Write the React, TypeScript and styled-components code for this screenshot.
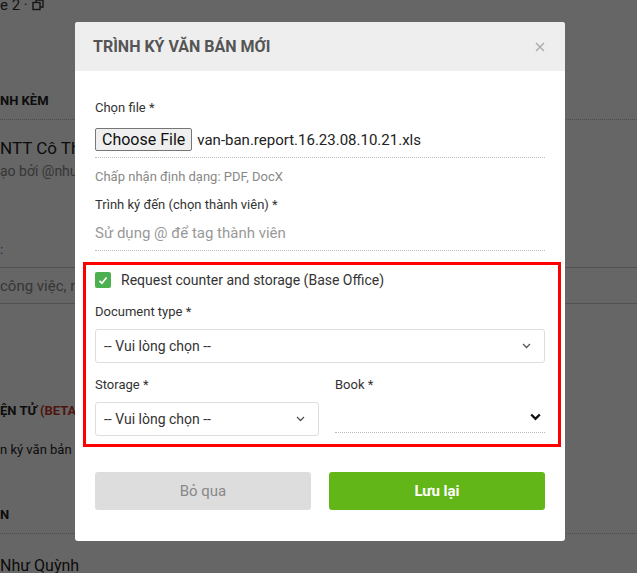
import React from "react";
import styled, { createGlobalStyle } from "styled-components";

const GlobalStyle = createGlobalStyle`
  html, body { margin: 0; padding: 0; }
  body {
    font-family: Roboto, "Noto Sans", "Liberation Sans", sans-serif;
    color: #333;
    overflow: hidden;
    background: #fff;
  }
  * { box-sizing: border-box; }
`;

const Page = styled.div`
  position: relative;
  width: 637px;
  height: 573px;
  overflow: hidden;
  background: #fff;
`;

/* ---------- background page (dimmed) ---------- */
const BgColumn = styled.div`
  display: flex;
  flex-direction: column;
  width: 100%;
`;

const BgTop = styled.div`
  font-size: 15px;
  line-height: 18px;
  margin-top: -4px;
  color: #333;
  display: flex;
  align-items: center;
  gap: 4px;
`;

const BgSectionTitle = styled.div<{ $mt: number; $line?: boolean }>`
  margin-top: ${(p) => p.$mt}px;
  font-size: 13px;
  font-weight: 700;
  line-height: 18px;
  color: #222;
  padding-bottom: 9px;
  border-bottom: ${(p) => (p.$line ? "1px dotted #bbb" : "none")};
`;

const BgBig = styled.div<{ $mt: number }>`
  margin-top: ${(p) => p.$mt}px;
  font-size: 17px;
  line-height: 20px;
  color: #222;
`;

const BgSub = styled.div<{ $mt: number }>`
  margin-top: ${(p) => p.$mt}px;
  font-size: 14px;
  line-height: 18px;
  color: #888;
`;

const BgLink = styled.div`
  margin-top: 62px;
  font-size: 13px;
  line-height: 16px;
  color: #2d7be5;
`;

const BgInput = styled.div`
  margin-top: 9px;
  border-top: 1px solid #ccc;
  border-bottom: 1px solid #ccc;
  height: 37px;
  display: flex;
  align-items: center;
  font-size: 15px;
  color: #888;
`;

const Beta = styled.span`
  color: #c0392b;
`;

const BgText = styled.div<{ $mt: number }>`
  margin-top: ${(p) => p.$mt}px;
  font-size: 13px;
  line-height: 18px;
  color: #222;
`;

const BgName = styled.div`
  margin-top: 22px;
  font-size: 16px;
  line-height: 20px;
  color: #222;
`;

const Overlay = styled.div`
  position: absolute;
  inset: 0;
  background: rgba(0, 0, 0, 0.6);
`;

/* ---------- modal ---------- */
const Modal = styled.div`
  position: absolute;
  left: 75px;
  top: 22px;
  width: 490px;
  background: #fff;
  border-radius: 3px;
  overflow: hidden;
`;

const Header = styled.div`
  height: 49px;
  background: #eeeeee;
  display: flex;
  align-items: center;
  justify-content: space-between;
  padding: 0 18px 0 18px;
`;

const Title = styled.h3`
  margin: 0;
  font-size: 16px;
  font-weight: 700;
  color: #555;
  letter-spacing: 0;
`;

const Close = styled.button`
  border: none;
  background: none;
  padding: 0;
  width: 14px;
  height: 14px;
  display: flex;
  align-items: center;
  justify-content: center;
  cursor: pointer;
`;

const Body = styled.div`
  padding: 29px 20px 31px;
  display: flex;
  flex-direction: column;
`;

const Label = styled.div<{ $mt?: number }>`
  margin-top: ${(p) => p.$mt ?? 0}px;
  font-size: 13px;
  line-height: 16px;
  color: #333;
`;

const FileRow = styled.div`
  margin-top: 12px;
  display: flex;
  align-items: center;
  gap: 5px;
  padding-bottom: 6px;
  border-bottom: 1px dotted #bbb;
`;

const ChooseBtn = styled.span`
  display: inline-flex;
  align-items: center;
  height: 23px;
  padding: 0 6px;
  background: #efefef;
  border: 1px solid #767676;
  border-radius: 2px;
  font-size: 16px;
  color: #111;
`;

const FileName = styled.span`
  font-size: 15px;
  color: #222;
`;

const Hint = styled.div`
  margin-top: 10px;
  font-size: 13px;
  line-height: 18px;
  color: #888;
`;

const TagInput = styled.div`
  margin-top: 9px;
  font-size: 15px;
  line-height: 22px;
  color: #999;
  padding-bottom: 6px;
  border-bottom: 1px dotted #bbb;
`;

const Highlight = styled.div`
  margin: 11px -16px 0 -12px;
  border: 3px solid #ff0000;
  padding: 7px 13px 8px 9px;
  display: flex;
  flex-direction: column;
`;

const CheckRow = styled.label`
  display: flex;
  align-items: center;
  gap: 10px;
  font-size: 14px;
  color: #333;
  height: 16px;
`;

const CheckBox = styled.span`
  width: 16px;
  height: 16px;
  border-radius: 2px;
  background: #4caf50;
  display: flex;
  align-items: center;
  justify-content: center;
`;

const SelectBox = styled.div<{ $mt?: number }>`
  margin-top: ${(p) => p.$mt ?? 9}px;
  height: 34px;
  border: 1px solid #dedede;
  border-radius: 3px;
  display: flex;
  align-items: center;
  justify-content: space-between;
  padding: 0 13px 0 8px;
  font-size: 14px;
  color: #333;
`;

const UnderlineSelect = styled.div`
  margin-top: 9px;
  height: 31px;
  border-bottom: 1px dotted #bbb;
  display: flex;
  align-items: center;
  justify-content: flex-end;
  padding: 0 4px 0 0;
`;

const Grid = styled.div`
  margin-top: 14px;
  display: grid;
  grid-template-columns: 224px 1fr;
  column-gap: 16px;
`;

const Col = styled.div`
  display: flex;
  flex-direction: column;
`;

const Actions = styled.div`
  margin-top: 25px;
  display: grid;
  grid-template-columns: 1fr 1fr;
  column-gap: 18px;
`;

const Btn = styled.button<{ $primary?: boolean }>`
  height: 38px;
  border: none;
  border-radius: 3px;
  font-family: inherit;
  font-size: 15px;
  font-weight: ${(p) => (p.$primary ? 700 : 400)};
  background: ${(p) => (p.$primary ? "#62b618" : "#dddddd")};
  color: ${(p) => (p.$primary ? "#fff" : "#888")};
  cursor: pointer;
`;

const ThinChevron = () => (
  <svg width="9" height="6" viewBox="0 0 9 6" fill="none">
    <path d="M1 1l3.5 3.5L8 1" stroke="#555" strokeWidth="1.3" />
  </svg>
);

const BoldChevron = () => (
  <svg width="11" height="8" viewBox="0 0 11 8" fill="none">
    <path d="M1.2 1.5l4.3 4.3 4.3-4.3" stroke="#111" strokeWidth="2.4" />
  </svg>
);

export default function App() {
  return (
    <Page>
      <GlobalStyle />
      <BgColumn>
        <BgTop>
          e 2 ·
          <svg width="12" height="12" viewBox="0 0 12 12" fill="none">
            <rect x="1" y="3.5" width="7" height="7" stroke="#333" strokeWidth="1.4" />
            <path d="M4 3.5V1h7v7H8" stroke="#333" strokeWidth="1.4" />
          </svg>
        </BgTop>
        <BgSectionTitle $mt={78} $line>
          NH KÈM
        </BgSectionTitle>
        <BgBig $mt={18}>NTT Cô Thị</BgBig>
        <BgSub $mt={4}>ạo bởi @nhuquynh</BgSub>
        <BgLink>:</BgLink>
        <BgInput>công việc, nhận xét</BgInput>
        <BgSectionTitle $mt={98}>
          ỆN TỬ <Beta>(BETA*)</Beta>
        </BgSectionTitle>
        <BgText $mt={12}>n ký văn bản mới</BgText>
        <BgSectionTitle $mt={47} $line>
          N
        </BgSectionTitle>
        <BgName>Như Quỳnh</BgName>
      </BgColumn>
      <Overlay />
      <Modal>
        <Header>
          <Title>TRÌNH KÝ VĂN BÁN MỚI</Title>
          <Close aria-label="close">
            <svg width="10" height="10" viewBox="0 0 10 10">
              <path d="M1 1l8 8M9 1l-8 8" stroke="#aaa" strokeWidth="1.4" />
            </svg>
          </Close>
        </Header>
        <Body>
          <Label>Chọn file *</Label>
          <FileRow>
            <ChooseBtn>Choose File</ChooseBtn>
            <FileName>van-ban.report.16.23.08.10.21.xls</FileName>
          </FileRow>
          <Hint>Chấp nhận định dạng: PDF, DocX</Hint>
          <Label $mt={11}>Trình ký đến (chọn thành viên) *</Label>
          <TagInput>Sử dụng @ để tag thành viên</TagInput>
          <Highlight>
            <CheckRow>
              <CheckBox>
                <svg width="10" height="9" viewBox="0 0 10 9" fill="none">
                  <path d="M1.5 4.8l2.4 2.4L8.6 1.5" stroke="#fff" strokeWidth="1.8" />
                </svg>
              </CheckBox>
              Request counter and storage (Base Office)
            </CheckRow>
            <Label $mt={16}>Document type *</Label>
            <SelectBox>
              -- Vui lòng chọn --
              <ThinChevron />
            </SelectBox>
            <Grid>
              <Col>
                <Label>Storage *</Label>
                <SelectBox>
                  -- Vui lòng chọn --
                  <ThinChevron />
                </SelectBox>
              </Col>
              <Col>
                <Label>Book *</Label>
                <UnderlineSelect>
                  <BoldChevron />
                </UnderlineSelect>
              </Col>
            </Grid>
          </Highlight>
          <Actions>
            <Btn>Bỏ qua</Btn>
            <Btn $primary>Lưu lại</Btn>
          </Actions>
        </Body>
      </Modal>
    </Page>
  );
}
